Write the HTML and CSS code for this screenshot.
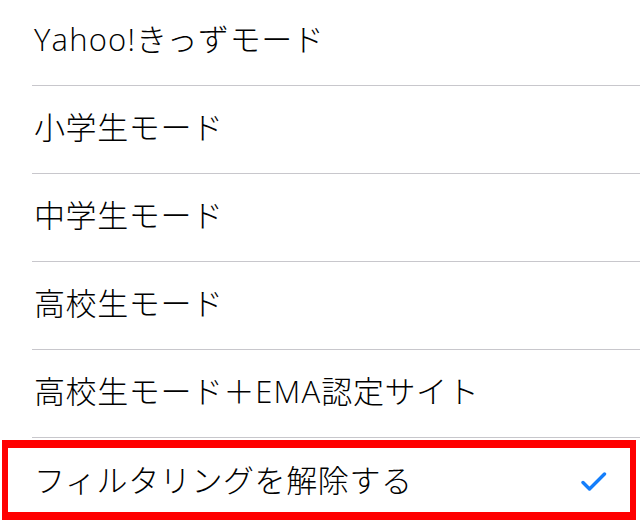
FILE: index.html
```html
<!DOCTYPE html>
<html lang="ja">
<head>
    <meta charset="UTF-8">
    <meta name="viewport" content="width=device-width, initial-scale=1.0">
    <title>フィルタリング設定</title>
    <link rel="stylesheet" href="styles.css">
</head>
<body>

    <ul class="mode-list">
        <li class="mode-item"><span class="latin">Yahoo!</span>きっずモード</li>
        <li class="mode-item">小学生モード</li>
        <li class="mode-item">中学生モード</li>
        <li class="mode-item">高校生モード</li>
        <li class="mode-item">高校生モード＋<span class="latin">EMA</span>認定サイト</li>
        <li class="mode-item selected">
            フィルタリングを解除する
            <svg class="check" width="26" height="20" viewBox="0 0 26 20">
                <path d="M2 10.5 L8.5 17 L23.5 2" fill="none" stroke="#147efb" stroke-width="3.4" stroke-linecap="round" stroke-linejoin="round"/>
            </svg>
        </li>
    </ul>

    <!-- 注目枠 -->
    <div class="highlight"></div>

</body>
</html>
```

FILE: styles.css
```css
body {
    margin: 0;
    background: #fff;
    font-family: "Open Sans", "Noto Sans CJK JP", sans-serif;
    color: #000;
    position: relative;
    height: 523px;
    overflow: hidden;
}
.mode-list {
    list-style: none;
    margin: -2px 0 0 0;
    padding: 0 0 0 32px;
}
.mode-item {
    box-sizing: border-box;
    height: 88px;
    border-bottom: 1px solid #c8c7cc;
    display: flex;
    align-items: center;
    padding: 0 33px 4px 2px;
    font-size: 31px;
    font-weight: 300;
    line-height: 1;
    letter-spacing: 0.6px;
}
.latin {
    letter-spacing: 1.2px;
}
.mode-item.selected {
    justify-content: space-between;
    border-bottom: none;
}
.check {
    display: block;
    margin-top: 4px;
}
.highlight {
    position: absolute;
    left: 2px;
    top: 440px;
    width: 622px;
    height: 64px;
    border-style: solid;
    border-color: #ff0000;
    border-width: 8px 6px;
}
```
